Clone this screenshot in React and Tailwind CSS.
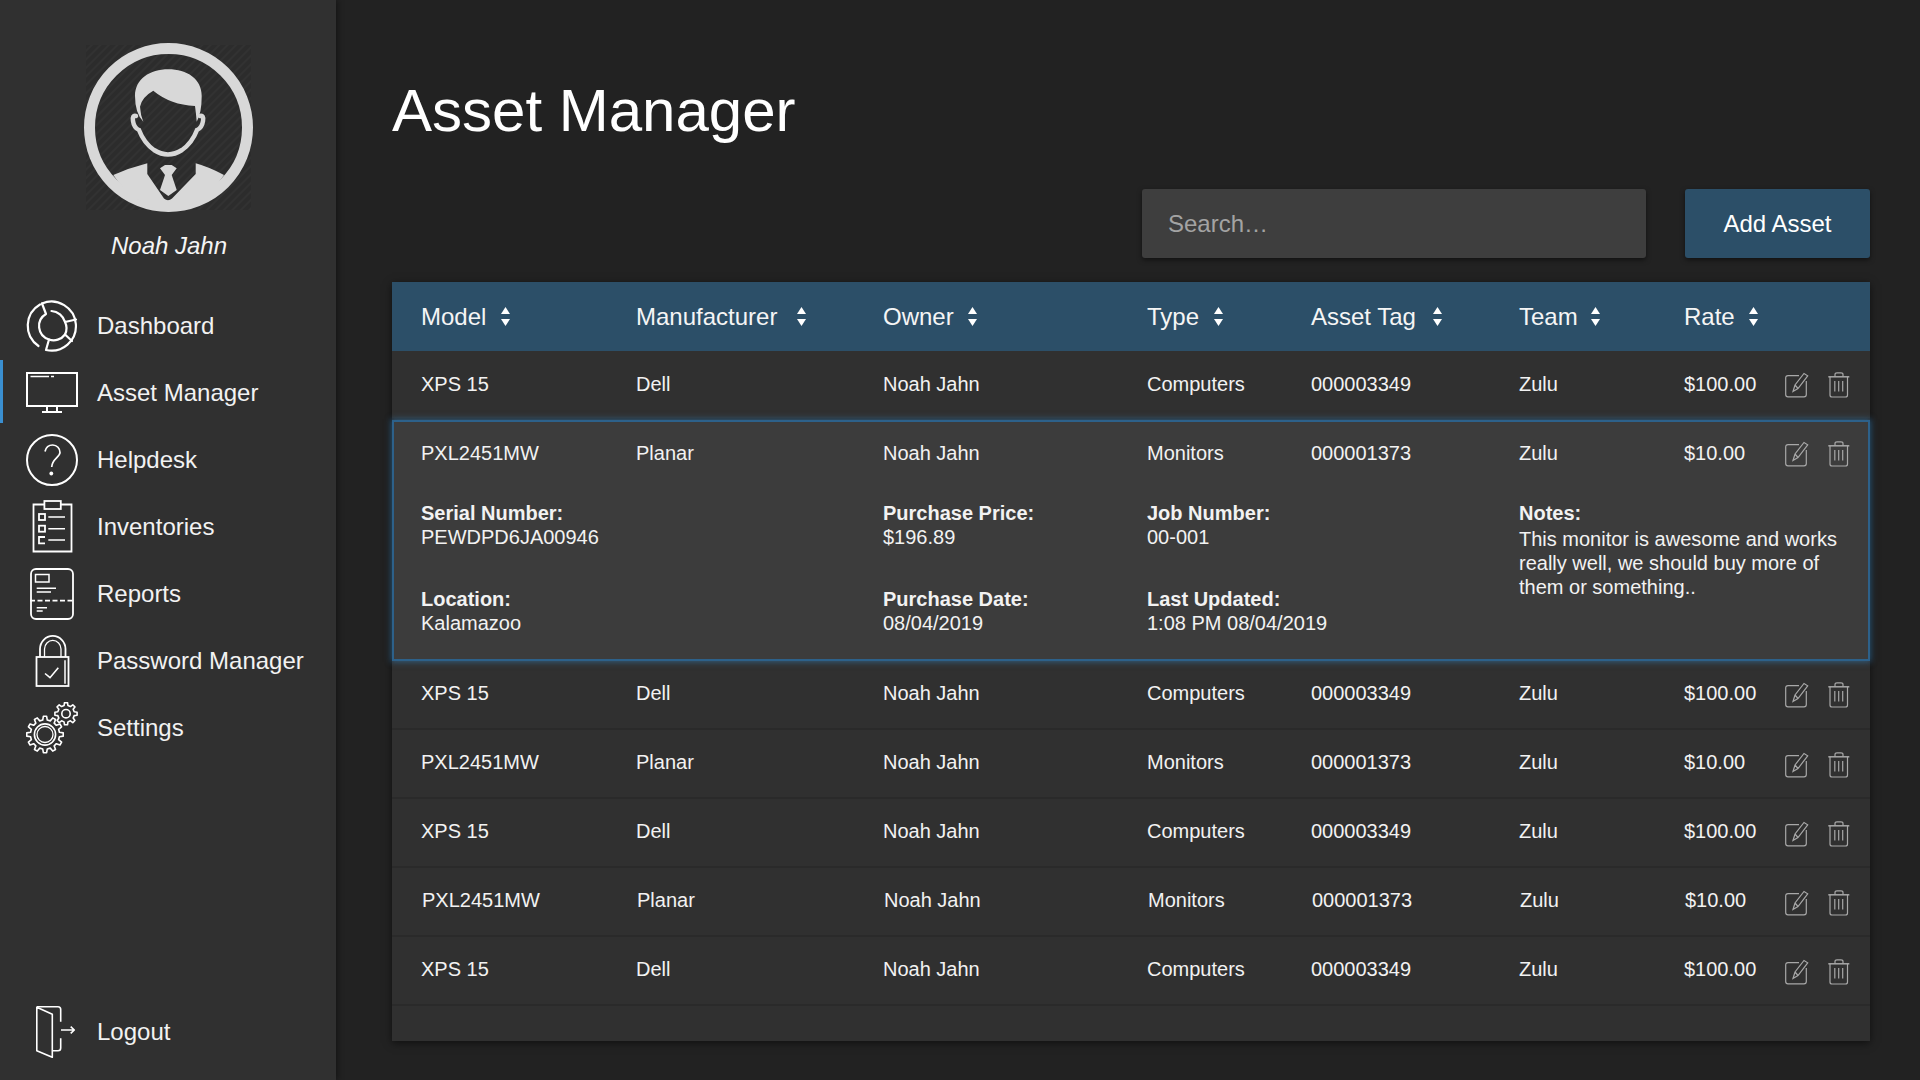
const gearPath = (cx, cy, outer, inner, teeth) => {
  let d = "";
  const step = (Math.PI * 2) / teeth;
  for (let i = 0; i < teeth; i++) {
    const a = i * step - Math.PI / 2;
    const pts = [
      [inner, a - step * 0.3],
      [outer, a - step * 0.17],
      [outer, a + step * 0.17],
      [inner, a + step * 0.3],
    ];
    pts.forEach(([r, t], j) => {
      const x = (cx + r * Math.cos(t)).toFixed(2);
      const y = (cy + r * Math.sin(t)).toFixed(2);
      d += `${i === 0 && j === 0 ? "M" : "L"}${x} ${y} `;
    });
  }
  return d + "Z";
};

function Avatar() {
  return (
    <svg width="170" height="170" viewBox="0 0 170 170" className="block">
      <defs>
        <pattern id="hatch" width="6" height="6" patternUnits="userSpaceOnUse" patternTransform="rotate(45)">
          <rect width="6" height="6" fill="#2c2c2c" />
          <rect width="2" height="6" fill="#323232" />
        </pattern>
      </defs>
      <rect x="2" y="2" width="165" height="165" fill="url(#hatch)" />
      <circle cx="84.5" cy="84.5" r="79" fill="none" stroke="#d8d8d8" strokeWidth="11" />
      <path
        fill="#d8d8d8"
        d="M29.3 132 Q45 125 63.3 120.3 V131 L80 155.5 Q84 159 88 155.5 L111.7 131 V120.3 Q125 124 140 132 A84 84 0 0 1 84.5 168.5 A84 84 0 0 1 29.3 132 Z"
      />
      <path
        fill="#d8d8d8"
        d="M59.3 78.7 Q51 70 51 53 C51 36 66 26.3 84.3 26.3 C103 26.3 117.7 36 117.7 53 Q117.7 70 112.7 78.7 Q112 70 111 63 Q98 62 89.3 59 Q78 55 69.3 47.7 Q58 54 56 63.7 Q56.5 72 59.3 78.7 Z"
      />
      <path
        fill="none"
        stroke="#d8d8d8"
        strokeWidth="4.5"
        strokeLinecap="round"
        d="M52 73 Q48 72 49 78 Q50 85 55 87 Q60 100 70 107 Q84 116 98 107 Q108 100 113 87 Q118 85 119 78 Q120 72 116 73"
      />
      <path
        fill="#d8d8d8"
        d="M76 125.3 L81 122 H87.7 L92.7 125.3 L87.7 132 L92.7 147 L84.3 153 L76 147 L81 132 Z"
      />
    </svg>
  );
}

function DashboardIcon() {
  return (
    <svg width="52" height="52" viewBox="0 0 52 52" fill="none" stroke="#fff" strokeWidth="2.2" strokeLinecap="round" strokeLinejoin="round">
      <path d="M14 4.5 A24.5 24.5 0 0 0 12.5 46" />
      <path d="M16 3.5 A24.5 24.5 0 1 1 20 50 L23 39.5" />
      <path d="M16 3.5 L20 14 A14 14 0 0 0 23 39.5 A14 14 0 0 0 39 34.5 L46 41" />
      <path d="M25.5 11 A15 15 0 0 1 39 22 L50 19.5" />
      <path d="M39 22 A14 14 0 0 1 39 34.5" />
    </svg>
  );
}

function MonitorIcon() {
  return (
    <svg width="52" height="42" viewBox="0 0 52 42" fill="none" stroke="#fff" strokeWidth="2">
      <rect x="1" y="1" width="50" height="33" />
      <path d="M21 34 V39 M31 34 V39 M16 40 H36" />
      <path d="M4.5 4.5 H23 M25 4.5 H28" strokeWidth="1.6" />
    </svg>
  );
}

function HelpIcon() {
  return (
    <svg width="52" height="52" viewBox="0 0 52 52" fill="none" stroke="#fff" strokeWidth="2">
      <circle cx="26" cy="26" r="25" />
      <path d="M19 17.5 C20 13 23 11 26.7 11 C31 11 34 14.5 34 18.5 C34 23 26 25 25.7 33" strokeWidth="1.7" />
      <circle cx="25.3" cy="39.5" r="1.9" fill="#fff" stroke="none" />
    </svg>
  );
}

function ClipboardIcon() {
  return (
    <svg width="52" height="53" viewBox="0 0 52 53" fill="none" stroke="#fff" strokeWidth="1.8">
      <path d="M18 4.5 H7.5 V51.5 H45.5 V4.5 H35" />
      <rect x="18.4" y="1" width="16.4" height="8" />
      <rect x="13" y="14" width="6" height="6" />
      <rect x="13" y="25.7" width="6" height="6" />
      <path d="M19 37 H13 V43.3 H19" />
      <path d="M22.3 17 H39 M22.3 28.7 H39 M22.3 40 H39" strokeWidth="1.5" />
    </svg>
  );
}

function ReportsIcon() {
  return (
    <svg width="52" height="52" viewBox="0 0 52 52" fill="none" stroke="#fff" strokeWidth="1.8">
      <rect x="5" y="1" width="42" height="50" rx="5" />
      <rect x="9.5" y="6.5" width="13.5" height="7.5" strokeWidth="1.5" />
      <path d="M10.7 20.3 H30 M10.7 24 H25 M10.7 39.7 H21 M10.7 43 H16.7" strokeWidth="1.6" />
      <path d="M4 32.7 H48" strokeDasharray="5 2.5" />
    </svg>
  );
}

function LockIcon() {
  return (
    <svg width="52" height="52" viewBox="0 0 52 52" fill="none" stroke="#fff" strokeWidth="1.8">
      <rect x="10.5" y="22" width="32" height="29" />
      <path d="M14 22 V14 A12.7 13 0 0 1 39.5 14 V22" />
      <path d="M18.5 22 V14 A8.2 8.5 0 0 1 35 14 V22" strokeWidth="1.3" />
      <path d="M19 38.5 L24 42.7 L32.3 32.7" strokeWidth="1.6" />
      <path d="M39 25.3 V48.7" strokeWidth="1.5" />
    </svg>
  );
}

function GearsIcon() {
  return (
    <svg width="52" height="52" viewBox="0 0 52 52" fill="none" stroke="#fff" strokeWidth="1.6" strokeLinejoin="round">
      <path d={gearPath(19, 32.5, 18.3, 14.6, 12)} />
      <circle cx="19" cy="32.5" r="10.6" />
      <circle cx="19" cy="32.5" r="8" strokeWidth="1.3" />
      <path d={gearPath(40, 11.7, 11.2, 8.4, 8)} />
      <circle cx="40" cy="11.7" r="4.2" />
    </svg>
  );
}

function LogoutIcon() {
  return (
    <svg width="40" height="52" viewBox="0 0 40 52" fill="none" stroke="#fff" strokeWidth="1.6" strokeLinejoin="round">
      <path d="M.8 1.3 L16.3 8.3 V51.3 L.8 44.7 Z" />
      <path d="M.8 .8 H22 Q24.7 .8 24.7 3.5 V15.7 M24.7 32.3 V42 Q24.7 44.7 22 44.7 H16.3" />
      <path d="M25 24 H38 M34.7 20.7 L38.3 24 L34.7 27.3" />
    </svg>
  );
}

function EditIcon() {
  return (
    <svg width="24" height="26" viewBox="0 0 24 26" fill="none" strokeWidth="1.2">
      <path d="M14 3.7 H3 Q.7 3.7 .7 6 V22.5 Q.7 24.8 3 24.8 H19 Q21.3 24.8 21.3 22.5 V9" stroke="#a8a8a8" />
      <path d="M8 19.5 L10 13 L19 1.5 L22.7 3.8 L13 16.5 Z M10 13 L13 16.5" stroke="#a8a8a8" />
    </svg>
  );
}

function TrashIcon() {
  return (
    <svg width="22" height="26" viewBox="0 0 22 26" fill="none" stroke="#a8a8a8" strokeWidth="1.2">
      <path d="M.3 4.8 H21.3" strokeWidth="1.5" />
      <path d="M7 4.8 V2.5 Q7 .8 9 .8 H13 Q15 .8 15 2.5 V4.8" />
      <path d="M2 5 V23 Q2 25 4 25 H17.5 Q19.5 25 19.5 23 V5" />
      <path d="M6.8 9 V19.5 M10.7 9 V19.5 M14.7 9 V19.5" />
    </svg>
  );
}

function SortIcon() {
  return (
    <svg width="9" height="20" viewBox="0 0 9 20" fill="#fff" className="shrink-0">
      <path d="M4.5 0 L9 7 H0 Z" />
      <path d="M4.5 19 L9 12 H0 Z" />
    </svg>
  );
}

const navItems = [
  { label: "Dashboard", icon: <DashboardIcon /> },
  { label: "Asset Manager", icon: <MonitorIcon />, active: true },
  { label: "Helpdesk", icon: <HelpIcon /> },
  { label: "Inventories", icon: <ClipboardIcon /> },
  { label: "Reports", icon: <ReportsIcon /> },
  { label: "Password Manager", icon: <LockIcon /> },
  { label: "Settings", icon: <GearsIcon /> },
];

const headers = [
  { label: "Model", gap: "gap-[15px]" },
  { label: "Manufacturer", gap: "gap-[20px]" },
  { label: "Owner", gap: "gap-[14px]" },
  { label: "Type", gap: "gap-[15px]" },
  { label: "Asset Tag", gap: "gap-[17px]" },
  { label: "Team", gap: "gap-[13px]" },
  { label: "Rate", gap: "gap-[14px]" },
];

const dell = ["XPS 15", "Dell", "Noah Jahn", "Computers", "000003349", "Zulu", "$100.00"];
const planar = ["PXL2451MW", "Planar", "Noah Jahn", "Monitors", "000001373", "Zulu", "$10.00"];

const gridCols = "grid grid-cols-[215px_247px_264px_164px_208px_165px_101px_auto]";

function RowCells({ values, shifted, iconDrop, tight }) {
  return (
    <div className={`${gridCols} items-start ${tight ? "pt-[20px]" : "pt-[21px]"} ${shifted ? "pl-[30px]" : "pl-[29px]"}`}>
      {values.map((v, i) => (
        <span key={i} className="text-[20px] leading-[24px] text-[#f2f2f2]">
          {v}
        </span>
      ))}
      <div className={`flex gap-[19px] ${shifted ? "-ml-px" : ""} ${iconDrop || ""}`}>
        <EditIcon />
        <TrashIcon />
      </div>
    </div>
  );
}

function Row({ values, shifted, iconDrop, tight }) {
  return (
    <div className="h-[69px] box-border border-b-2 border-[#2a2a2a]">
      <RowCells values={values} shifted={shifted} iconDrop={iconDrop} tight={tight} />
    </div>
  );
}

function Detail({ label, value }) {
  return (
    <div className="text-[20px] leading-[24px] text-[#f2f2f2]">
      <div className="font-bold">{label}</div>
      <div>{value}</div>
    </div>
  );
}

function ExpandedRow() {
  return (
    <div className="relative z-10 h-[241px] bg-[#3c3c3c] shadow-[0_0_6px_1px_rgba(52,130,190,0.55),inset_0_0_0_2px_#2d618a]">
      <RowCells values={planar} />
      <div className="grid grid-cols-[462px_264px_372px_auto] pl-[29px] mt-[34px]">
        <div className="flex flex-col gap-[38px]">
          <Detail label="Serial Number:" value="PEWDPD6JA00946" />
          <Detail label="Location:" value="Kalamazoo" />
        </div>
        <div className="flex flex-col gap-[38px]">
          <Detail label="Purchase Price:" value="$196.89" />
          <Detail label="Purchase Date:" value="08/04/2019" />
        </div>
        <div className="flex flex-col gap-[38px]">
          <Detail label="Job Number:" value="00-001" />
          <Detail label="Last Updated:" value="1:08 PM 08/04/2019" />
        </div>
        <div className="w-[327px] text-[20px] leading-[24px] text-[#f2f2f2]">
          <div className="font-bold mb-[2px]">Notes:</div>
          <div>This monitor is awesome and works really well, we should buy more of them or something..</div>
        </div>
      </div>
    </div>
  );
}

export default function App() {
  return (
    <div className="flex w-[1920px] h-[1080px] overflow-hidden bg-[#222222] text-white font-['Liberation_Sans',Arial,sans-serif]">
      <aside className="relative z-20 flex flex-col w-[336px] shrink-0 bg-[#303030] shadow-[2px_0_6px_rgba(0,0,0,0.4)]">
        <div className="flex justify-center mt-[43px] pl-px">
          <Avatar />
        </div>
        <div className="mt-[17px] pl-[2px] text-center text-[24px] leading-[32px] italic text-[#f5f5f5]">Noah Jahn</div>
        <nav className="mt-[30px]">
          {navItems.map((item) => (
            <div key={item.label} className="relative flex items-center h-[67px] pl-[26px]">
              {item.active && <div className="absolute left-0 top-px w-[3px] h-[63px] bg-[#3a8fd0]" />}
              <div className="flex justify-center w-[52px]">{item.icon}</div>
              <span className="ml-[19px] text-[24px] text-[#f2f2f2]">{item.label}</span>
            </div>
          ))}
        </nav>
        <div className="mt-auto mb-[15px] flex items-center h-[67px] pl-[26px]">
          <div className="flex justify-center w-[52px] pl-[7px]">
            <LogoutIcon />
          </div>
          <span className="ml-[19px] text-[24px] text-[#f2f2f2]">Logout</span>
        </div>
      </aside>

      <main className="flex-1 pl-[56px] pr-[50px] pt-[77px]">
        <h1 className="text-[60px] leading-[68px] text-white">Asset Manager</h1>

        <div className="flex justify-end gap-[39px] mt-[44px]">
          <div className="flex items-center w-[504px] h-[69px] pl-[26px] rounded-[3px] bg-[#3e3e3e] text-[24px] text-[#a3a3a3] shadow-[0_2px_5px_rgba(0,0,0,0.5)]">
            Search…
          </div>
          <button className="w-[185px] h-[69px] rounded-[3px] bg-[#2c4f68] text-[24px] text-white shadow-[0_2px_5px_rgba(0,0,0,0.5)]">
            Add Asset
          </button>
        </div>

        <div className="mt-[24px] h-[759px] bg-[#303030] shadow-[0_2px_8px_rgba(0,0,0,0.55)]">
          <div className={`${gridCols} items-center h-[69px] pl-[29px] bg-[#2c4f68]`}>
            {headers.map((h) => (
              <div key={h.label} className={`flex items-center ${h.gap} text-[24px] text-[#f5f5f5]`}>
                {h.label}
                <SortIcon />
              </div>
            ))}
          </div>
          <Row values={dell} />
          <ExpandedRow />
          <Row values={dell} tight iconDrop="mt-px" />
          <Row values={planar} tight iconDrop="mt-[2px]" />
          <Row values={dell} tight iconDrop="mt-[2px]" />
          <Row values={planar} shifted tight iconDrop="mt-[2px]" />
          <Row values={dell} tight iconDrop="mt-[2px]" />
        </div>
      </main>
    </div>
  );
}
